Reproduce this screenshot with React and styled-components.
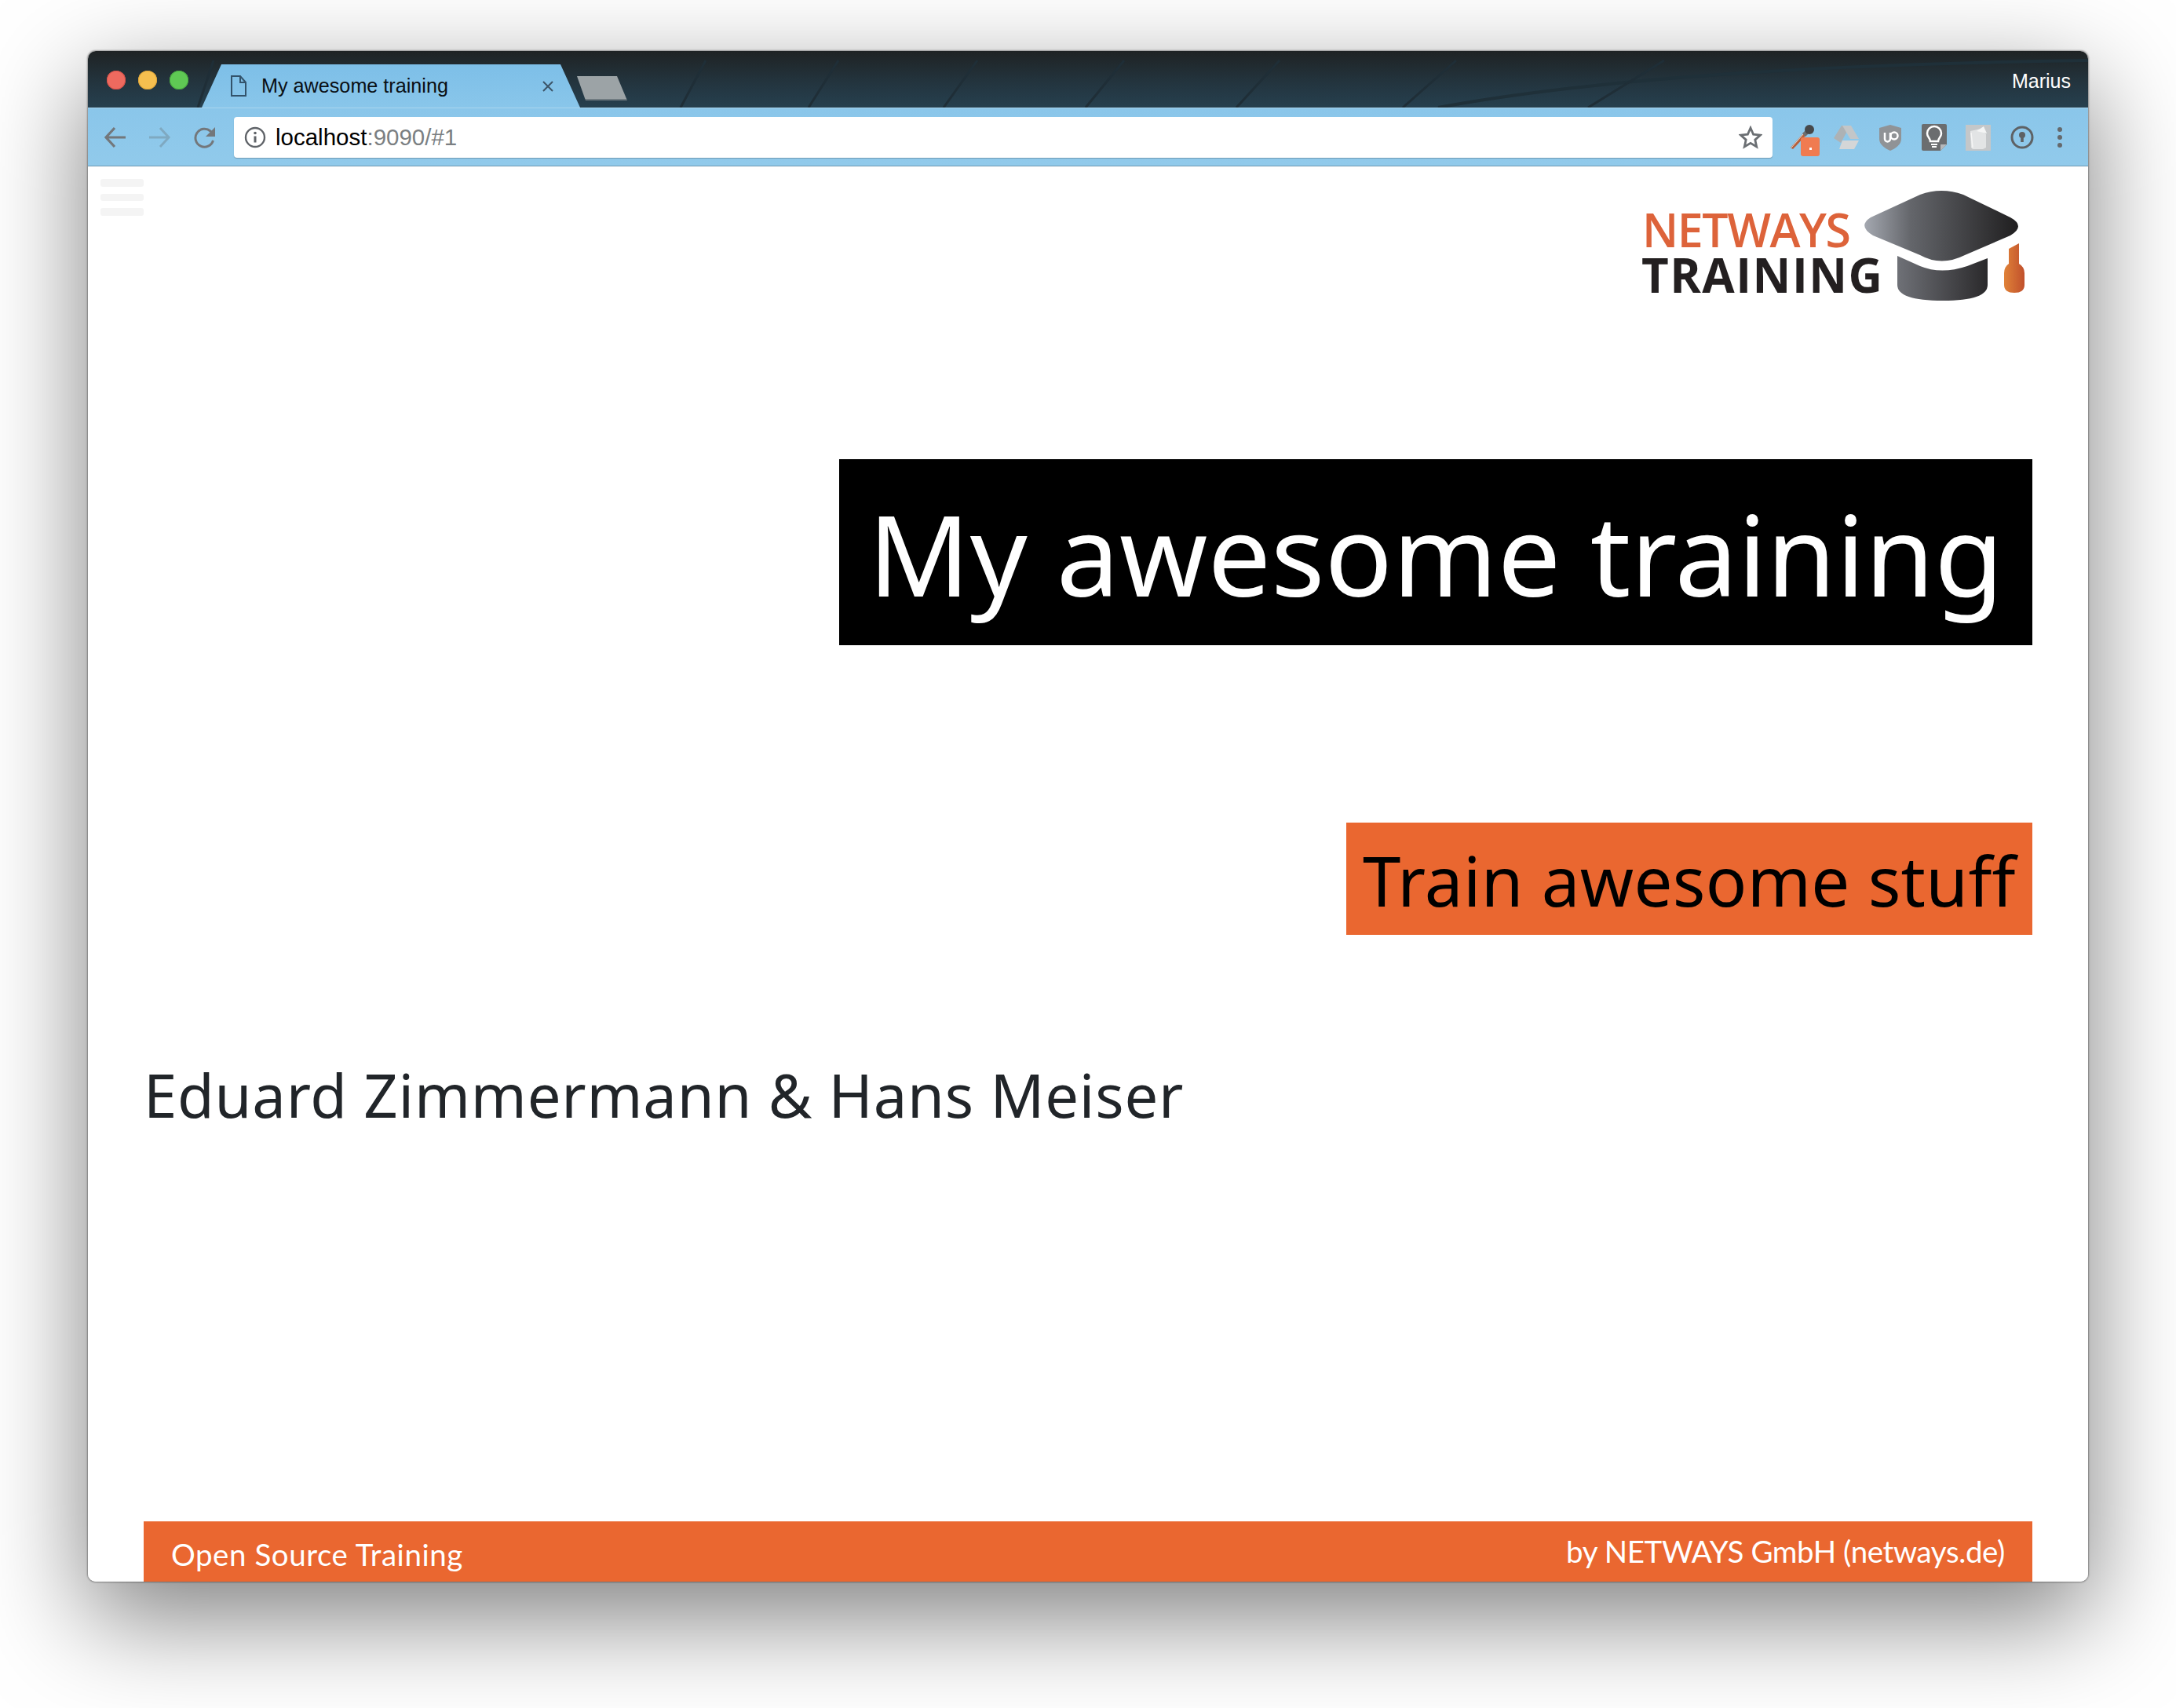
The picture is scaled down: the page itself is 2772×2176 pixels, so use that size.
import React from "react";
import styled, { createGlobalStyle } from "styled-components";

const Global = createGlobalStyle`
  html, body { margin: 0; padding: 0; background: #fff; }
  #root { width: 2772px; height: 2176px; overflow: hidden; }
`;

const Stage = styled.div`
  width: 2772px;
  height: 2176px;
  padding: 65px 112px 161px;
  box-sizing: border-box;
  background: #fff;
`;

const Win = styled.div`
  width: 100%;
  height: 100%;
  display: flex;
  flex-direction: column;
  border-radius: 10px;
  overflow: hidden;
  background: #fff;
  position: relative;
`;

const WinShadow = styled.div`
  height: 100%;
  border-radius: 10px;
  box-shadow: 0 44px 130px 2px rgba(0, 0, 0, 0.5), 0 0 2px 1px rgba(0, 0, 0, 0.35);
`;

const TitleBar = styled.div`
  height: 72px;
  flex: none;
  display: flex;
  align-items: flex-end;
  position: relative;
  background: linear-gradient(180deg, #1f2324 0%, #23343e 55%, #26404f 100%);
  padding-left: 145px;
`;

const Lights = styled.div`
  position: absolute;
  left: 24px;
  top: 25px;
  display: flex;
  gap: 16px;
`;

const Light = styled.span`
  width: 24px;
  height: 24px;
  border-radius: 50%;
  background: ${(p) => p.$c};
  box-shadow: inset 0 0 0 1px ${(p) => p.$b};
`;

const Tab = styled.div`
  width: 482px;
  height: 55px;
  padding: 0 38px 0 37px;
  box-sizing: border-box;
  display: flex;
  align-items: center;
  background: linear-gradient(180deg, #7dbfe8, #89c6ea);
  clip-path: polygon(25px 0, 457px 0, 482px 100%, 0 100%);
  position: relative;
`;

const TabTitle = styled.span`
  flex: 1;
  margin-left: 19px;
  font: 25.2px/1 "Liberation Sans", sans-serif;
  color: #0a0f14;
`;

const TabClose = styled.svg`
  width: 14px;
  height: 14px;
  margin-right: -4px;
`;

const NewTab = styled.div`
  width: 65px;
  height: 31px;
  margin: 0 0 9px -5px;
  background: linear-gradient(180deg, #9ca3a6 0 94%, #6f7a80 94%);
  clip-path: polygon(1px 0, 52px 0, 65px 100%, 12px 100%);
  position: relative;
`;

const UserName = styled.span`
  position: absolute;
  right: 22px;
  top: 26px;
  font: 500 25px/1 "Liberation Sans", sans-serif;
  color: #fff;
`;

const Swoosh = styled.svg`
  position: absolute;
  inset: 0;
  width: 100%;
  height: 100%;
  pointer-events: none;
`;

const Toolbar = styled.div`
  height: 75px;
  flex: none;
  box-sizing: border-box;
  display: flex;
  align-items: center;
  padding: 11px 0 11px 20px;
  background: linear-gradient(180deg, #8ac6ea, #91caeb);
  border-top: 1px solid #a9d6ef;
  border-bottom: 1px solid #6e98b2;
`;

const NavIcon = styled.svg`
  width: 30px;
  height: 28px;
  flex: none;
  margin-right: ${(p) => p.$mr || 26}px;
`;

const Omnibox = styled.div`
  width: 1960px;
  height: 52px;
  margin-left: -5px;
  box-sizing: border-box;
  flex: none;
  display: flex;
  align-items: center;
  padding: 0 13px 0 13px;
  background: #fff;
  border-radius: 4px;
  box-shadow: 0 1px 1px rgba(90, 120, 140, 0.6);
`;

const Url = styled.span`
  flex: 1;
  margin-left: 12px;
  font: 29.5px/1 "Liberation Sans", sans-serif;
  color: #000;
`;

const UrlDim = styled.span`
  color: #7b7f82;
`;

const Extensions = styled.div`
  display: flex;
  align-items: center;
  margin-left: 22px;
  gap: 20px;
`;

const ExtIcon = styled.svg`
  width: ${(p) => p.$w || 36}px;
  height: 36px;
  flex: none;
  overflow: visible;
  margin-right: ${(p) => p.$mr || 0}px;
`;

const MenuDots = styled.svg`
  width: 8px;
  height: 28px;
  flex: none;
  margin-left: 6px;
`;

const Content = styled.main`
  flex: 1;
  min-height: 0;
  display: flex;
  flex-direction: column;
  padding: 0 71px;
  position: relative;
`;

const Burger = styled.div`
  position: absolute;
  left: 16px;
  top: 16px;
  width: 55px;
  display: flex;
  flex-direction: column;
  gap: 9px;
`;

const BurgerLine = styled.span`
  height: 9.5px;
  border-radius: 3px;
  background: #f4f4f4;
`;

const LogoMark = styled.svg`
  width: 540px;
  height: 180px;
  flex: none;
  align-self: flex-end;
  margin: 8px -12px 0 0;
`;

const Title = styled.h1`
  align-self: flex-end;
  margin: 185px 0 0;
  width: 1520px;
  height: 237px;
  box-sizing: border-box;
  padding: 2px 0 0 37px;
  display: flex;
  align-items: center;
  background: #000;
  color: #fff;
  font: 400 143px/1 "Noto Sans", sans-serif;
  white-space: nowrap;
`;

const Subtitle = styled.h2`
  align-self: flex-end;
  margin: 226px 0 0;
  width: 874px;
  height: 143px;
  box-sizing: border-box;
  padding: 3px 0 0 21px;
  display: flex;
  align-items: center;
  background: #ea6730;
  color: #000;
  font: 400 87px/1 "Noto Sans", sans-serif;
  letter-spacing: 0.3px;
  white-space: nowrap;
`;

const Author = styled.p`
  margin: 158px 0 0;
  font: 400 76px/1.2 "Noto Sans", sans-serif;
  letter-spacing: 0.77px;
  color: #212529;
  white-space: nowrap;
`;

const Footer = styled.footer`
  margin-top: auto;
  height: 77px;
  flex: none;
  display: flex;
  justify-content: space-between;
  padding: 0 35px;
  box-sizing: border-box;
  background: #ea6730;
  border-top: 1px solid #ee8a5f;
  color: #fff;
  font: 400 38.5px/1 "Lato", sans-serif;
`;

const FootLeft = styled.span`
  margin-top: 22px;
  letter-spacing: 0.55px;
`;
const FootRight = styled.span`
  margin-top: 18px;
  letter-spacing: -0.4px;
`;

const gray = "#73777b";

export default function App() {
  return (
    <Stage>
      <Global />
      <WinShadow>
        <Win>
          <TitleBar>
            <Swoosh viewBox="0 0 2548 72" preserveAspectRatio="none">
              <path d="M1720 72 Q2000 20 2548 12" stroke="#1f3039" strokeWidth="4" fill="none" />
              <path d="M140 72L160 12M755 72L787 12M918 72L956 12M1090 72L1133 12M1271 72L1320 12M1463 72L1518 12M1675 72L1743 12M1911 72L2008 12" stroke="#1f2e37" strokeWidth="3" fill="none" />
            </Swoosh>
            <Lights>
              <Light $c="#ee6a5f" $b="#d9524a" />
              <Light $c="#f6bf4f" $b="#dfa63a" />
              <Light $c="#5fc854" $b="#4bab42" />
            </Lights>
            <Tab>
              <svg width="20" height="27" viewBox="0 0 20 27" fill="none" stroke="#33536b" strokeWidth="2">
                <path d="M1 1h11l7 8v17H1zM12 1v8h7" />
              </svg>
              <TabTitle>My awesome training</TabTitle>
              <TabClose viewBox="0 0 14 14">
                <path d="M1 1l12 12M13 1L1 13" stroke="#3c5568" strokeWidth="2" />
              </TabClose>
            </Tab>
            <NewTab />
            <UserName>Marius</UserName>
          </TitleBar>
          <Toolbar>
            <NavIcon viewBox="0 0 30 28" fill="none" stroke={gray} strokeWidth="3.2">
              <path d="M28 14H4M14 2L3 14l11 12" />
            </NavIcon>
            <NavIcon $mr={29} viewBox="0 0 30 28" fill="none" stroke="#7fa9c1" strokeWidth="3">
              <path d="M2 14h24M16 2l11 12-11 12" />
            </NavIcon>
            <NavIcon viewBox="0 0 30 28" fill="none">
              <path d="M24.500 18A11.500 11.500 0 1 1 21 6l3 3" stroke={gray} strokeWidth="3" />
              <path d="M27 1v12H15z" fill={gray} />
            </NavIcon>
            <Omnibox>
              <svg width="28" height="28" viewBox="0 0 28 28" fill="none">
                <circle cx="14" cy="14" r="12" stroke="#5f6368" strokeWidth="2.400" />
                <path d="M14 12.500v8" stroke="#5f6368" strokeWidth="3" />
                <circle cx="14" cy="8.500" r="1.800" fill="#5f6368" />
              </svg>
              <Url>
                localhost<UrlDim>:9090/#1</UrlDim>
              </Url>
              <svg width="30" height="30" viewBox="0 0 30 30" fill="none">
                <path d="M15 3l3.600 8.200 8.900.9-6.700 6 1.900 8.800L15 22.400 7.300 26.900l1.900-8.800-6.700-6 8.900-.9z" stroke="#6b6f73" strokeWidth="2.800" />
              </svg>
            </Omnibox>
            <Extensions>
              <ExtIcon $w={38} $mr={-4} viewBox="0 0 38 36">
                <path d="M1 31L17 13l3 3L4 33z" fill="#b5603c" />
                <path d="M2 31L17 14" stroke="#e3ddd6" strokeWidth="1" />
                <path d="M16 13l5-5 4 4-5 5z" fill="#6d6f71" />
                <circle cx="25" cy="8" r="6" fill="#47494b" />
                <rect x="14" y="18" width="24" height="24" rx="3" fill="#f07b50" />
                <rect x="25" y="31" width="3" height="3" fill="#fff" />
              </ExtIcon>
              <ExtIcon viewBox="0 0 36 36">
                <path d="M12 3h11L11 25 2 19z" fill="#adb2b5" />
                <path d="M13 3h11l10 17H23z" fill="#c3c6c8" />
                <path d="M13 22h21l-6 11H9z" fill="#d4d6d7" />
              </ExtIcon>
              <ExtIcon viewBox="0 0 36 36">
                <path d="M18 2l14 4v14c0 7-7 12-14 15C11 32 4 27 4 20V6z" fill="#909396" />
                <path d="M11 12v8a3.500 3.500 0 0 0 7 0v-8" stroke="#fff" strokeWidth="2.500" fill="none" />
                <circle cx="23" cy="16" r="4.500" stroke="#fff" strokeWidth="2.500" fill="none" />
              </ExtIcon>
              <ExtIcon viewBox="0 0 36 36">
                <path d="M2 3a2 2 0 0 1 2-2h28a2 2 0 0 1 2 2v24l-8 8H4a2 2 0 0 1-2-2z" fill="#6b6d6f" />
                <path d="M34 27h-8v8z" fill="#b6b8ba" />
                <path d="M13 23c0-4-4-5-4-10a9 9 0 0 1 18 0c0 5-4 6-4 10z" fill="none" stroke="#fff" strokeWidth="2.500" />
                <path d="M14 27h8M15 30h6" stroke="#fff" strokeWidth="2.200" />
              </ExtIcon>
              <ExtIcon viewBox="0 0 36 36">
                <rect x="2" y="2" width="32" height="33" fill="#c4c7c9" />
                <path d="M8 10l13-3 7 7v17l-4 2H11l-2-2z" fill="#e2e4e5" />
                <path d="M16 10l9-6 4 9z" fill="#f4f5f5" />
                <path d="M9 12l2 19" stroke="#f5f5f5" strokeWidth="1.500" />
              </ExtIcon>
              <ExtIcon viewBox="0 0 36 36">
                <circle cx="18" cy="18" r="13" fill="none" stroke="#5e6265" strokeWidth="3" />
                <circle cx="18" cy="15" r="4" fill="#5e6265" />
                <rect x="16.200" y="15" width="3.600" height="9" fill="#5e6265" />
              </ExtIcon>
              <MenuDots viewBox="0 0 8 28" fill="#65696c">
                <circle cx="4" cy="4" r="3" />
                <circle cx="4" cy="14" r="3" />
                <circle cx="4" cy="24" r="3" />
              </MenuDots>
            </Extensions>
          </Toolbar>
          <Content>
            <Burger>
              <BurgerLine />
              <BurgerLine />
              <BurgerLine />
            </Burger>
            <LogoMark viewBox="0 0 540 180">
              <defs>
                <linearGradient id="capGrad" x1="0" x2="1" y1="0" y2="0">
                  <stop offset="0" stopColor="#a4a8b0" />
                  <stop offset="0.3" stopColor="#64666b" />
                  <stop offset="1" stopColor="#201f20" />
                </linearGradient>
                <linearGradient id="bandGrad" x1="0" x2="1" y1="0" y2="0">
                  <stop offset="0" stopColor="#6f7177" />
                  <stop offset="1" stopColor="#2a292b" />
                </linearGradient>
                <linearGradient id="tasselGrad" x1="0" x2="1" y1="0" y2="0">
                  <stop offset="0" stopColor="#e08238" />
                  <stop offset="1" stopColor="#c0502c" />
                </linearGradient>
              </defs>
              <text x="31" y="95" fontFamily="'Open Sans', sans-serif" fontWeight="600" fontSize="59" fill="#dd633a" textLength="266">NETWAYS</text>
              <text x="30" y="153" fontFamily="'Open Sans', sans-serif" fontWeight="700" fontSize="60" fill="#231f20" textLength="307">TRAINING</text>
              <path d="M322 57L385 28Q412 18 440 28L500 57Q520 68 500 80L442 105Q412 120 385 105L325 80Q305 68 322 57Z" fill="url(#capGrad)" />
              <path d="M356 106L385 119Q412 130 445 119L471 109V143Q471 163 414 163Q356 163 356 143Z" fill="url(#bandGrad)" />
              <path d="M498 97L511 90V116Q518 120 518 128V143Q518 153 505 153Q492 153 492 143V128Q492 120 498 116Z" fill="url(#tasselGrad)" />
            </LogoMark>
            <Title>My awesome training</Title>
            <Subtitle>Train awesome stuff</Subtitle>
            <Author>Eduard Zimmermann &amp; Hans Meiser</Author>
            <Footer>
              <FootLeft>Open Source Training</FootLeft>
              <FootRight>by NETWAYS GmbH (netways.de)</FootRight>
            </Footer>
          </Content>
        </Win>
      </WinShadow>
    </Stage>
  );
}
